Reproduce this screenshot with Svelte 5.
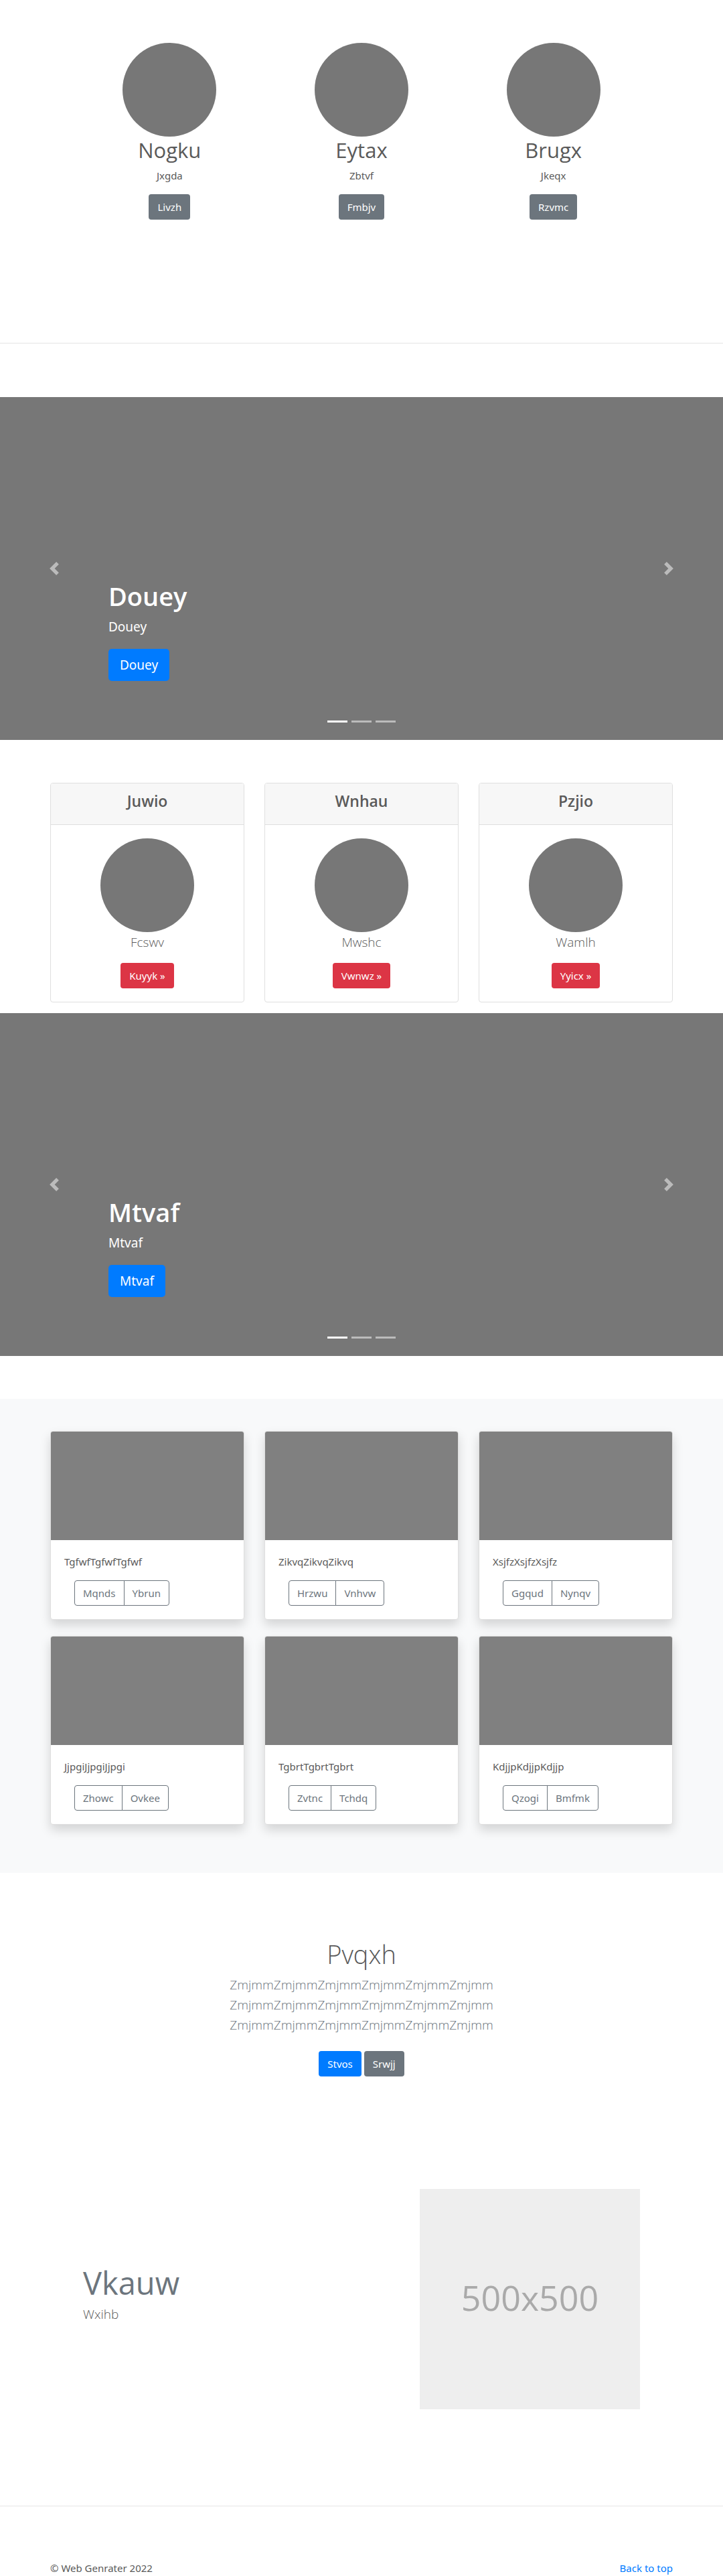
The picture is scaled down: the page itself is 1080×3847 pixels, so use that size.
<script>
  const people = [
    { name: 'Nogku', text: 'Jxgda', action: 'Livzh' },
    { name: 'Eytax', text: 'Zbtvf', action: 'Fmbjv' },
    { name: 'Brugx', text: 'Jkeqx', action: 'Rzvmc' }
  ];
  const plans = [
    { title: 'Juwio', text: 'Fcswv', action: 'Kuyyk »' },
    { title: 'Wnhau', text: 'Mwshc', action: 'Vwnwz »' },
    { title: 'Pzjio', text: 'Wamlh', action: 'Yyicx »' }
  ];
  const album = [
    { text: 'TgfwfTgfwfTgfwf', actions: ['Mqnds', 'Ybrun'] },
    { text: 'ZikvqZikvqZikvq', actions: ['Hrzwu', 'Vnhvw'] },
    { text: 'XsjfzXsjfzXsjfz', actions: ['Ggqud', 'Nynqv'] },
    { text: 'JjpgiJjpgiJjpgi', actions: ['Zhowc', 'Ovkee'] },
    { text: 'TgbrtTgbrtTgbrt', actions: ['Zvtnc', 'Tchdq'] },
    { text: 'KdjjpKdjjpKdjjp', actions: ['Qzogi', 'Bmfmk'] }
  ];
  const introLine = 'Zmjmm'.repeat(6);
</script>

{#snippet carousel(label)}
  <section class="carousel" aria-label={label}>
    <div class="caption">
      <h1>{label}</h1>
      <p>{label}</p>
      <a class="btn btn-lg primary" href="#top">{label}</a>
    </div>
    <button class="arrow prev" aria-label="Previous">
      <svg viewBox="0 0 8 8" width="20" height="20"><path d="M5.25 0l-4 4 4 4 1.5-1.5L4.25 4l2.5-2.5L5.25 0z" fill="#fff" /></svg>
    </button>
    <button class="arrow next" aria-label="Next">
      <svg viewBox="0 0 8 8" width="20" height="20"><path d="M2.75 0l-1.5 1.5L3.75 4l-2.5 2.5L2.75 8l4-4-4-4z" fill="#fff" /></svg>
    </button>
    <div class="indicators">
      {#each [0, 1, 2] as i}
        <button class:active={i === 0} aria-label={`Slide ${i + 1}`}></button>
      {/each}
    </div>
  </section>
{/snippet}

<main id="top">
  <section class="people container">
    {#each people as person}
      <div class="person">
        <div class="circle"></div>
        <h2>{person.name}</h2>
        <p>{person.text}</p>
        <a class="btn secondary" href="#top">{person.action}</a>
      </div>
    {/each}
  </section>

  <hr class="divider" />

  {@render carousel('Douey')}

  <section class="plans container columns">
    {#each plans as plan}
      <article class="card">
        <header><h4>{plan.title}</h4></header>
        <div class="plan-body">
          <div class="circle"></div>
          <p class="lead">{plan.text}</p>
          <a class="btn danger" href="#top">{plan.action}</a>
        </div>
      </article>
    {/each}
  </section>

  {@render carousel('Mtvaf')}

  <section class="album">
    <div class="container columns">
      {#each album as item}
        <article class="card raised">
          <div class="thumb"></div>
          <div class="card-body">
            <p>{item.text}</p>
            <div class="group">
              {#each item.actions as action}
                <button class="btn outline">{action}</button>
              {/each}
            </div>
          </div>
        </article>
      {/each}
    </div>
  </section>

  <section class="intro">
    <h1>Pvqxh</h1>
    <p class="lead">{introLine}<br />{introLine}<br />{introLine}</p>
    <div class="intro-actions">
      <a class="btn primary" href="#top">Stvos</a>
      <a class="btn secondary" href="#top">Srwjj</a>
    </div>
  </section>

  <section class="feature container">
    <div>
      <h2>Vkauw</h2>
      <p class="lead">Wxihb</p>
    </div>
    <div class="placeholder">500x500</div>
  </section>

  <hr class="footer-line" />

  <footer class="container">
    <span>© Web Genrater 2022</span>
    <a href="#top">Back to top</a>
  </footer>
</main>

<style>
  :global(body) {
    background: #fff;
  }
  main {
    font: 400 15px/24px 'Noto Sans', 'Open Sans', sans-serif;
    color: #5a5a5a;
  }
  main :global(*) {
    box-sizing: border-box;
  }
  h1, h2, h4, p {
    margin: 0;
  }
  h1, h2, h4, .lead, .placeholder {
    font-family: 'Open Sans', 'Noto Sans', sans-serif;
  }
  a {
    color: #007bff;
    text-decoration: none;
  }
  .container {
    max-width: 960px;
    margin: 0 auto;
    padding: 0 15px;
  }
  .columns {
    display: grid;
    grid-template-columns: repeat(3, 1fr);
    column-gap: 30px;
    row-gap: 24px;
  }
  .circle {
    width: 140px;
    height: 140px;
    margin: 0 auto;
    border-radius: 50%;
    background: #777;
  }
  .btn {
    display: inline-block;
    padding: 6px 12px;
    border: 1px solid transparent;
    border-radius: 4px;
    color: #fff;
    font: inherit;
    cursor: pointer;
  }
  .btn-lg {
    padding: 8px 16px;
    border-radius: 5px;
    font-size: 19px;
    line-height: 30px;
  }
  .primary {
    background: #007bff;
  }
  .secondary {
    background: #6c757d;
  }
  .danger {
    background: #dc3545;
  }
  .lead {
    font-size: 19px;
    font-weight: 300;
    line-height: 30px;
  }

  .people {
    display: grid;
    grid-template-columns: repeat(3, 1fr);
    max-width: 890px;
    padding-top: 64px;
    text-align: center;
  }
  .person h2 {
    margin-bottom: 6px;
    font-size: 31px;
    font-weight: 400;
    line-height: 40px;
  }
  .person p {
    margin-bottom: 16px;
  }
  hr {
    height: 1px;
    border: 0;
    background: #e5e5e5;
  }
  .divider {
    margin: 184px 0 80px;
  }

  .carousel {
    position: relative;
    display: flex;
    flex-direction: column;
    justify-content: flex-end;
    min-height: 512px;
    padding: 0 15% 88px;
    background: #777;
    color: #fff;
  }
  .caption h1 {
    margin-bottom: 6px;
    font-size: 38px;
    font-weight: 600;
    line-height: 50px;
  }
  .caption p {
    margin-bottom: 18px;
    font-size: 19px;
    line-height: 30px;
  }
  .arrow {
    position: absolute;
    top: 0;
    bottom: 0;
    display: flex;
    align-items: center;
    justify-content: center;
    width: 15%;
    padding: 0;
    border: 0;
    background: none;
    opacity: 0.5;
  }
  .prev {
    left: 0;
  }
  .next {
    right: 0;
  }
  .indicators {
    position: absolute;
    right: 0;
    bottom: 26px;
    left: 0;
    display: flex;
    justify-content: center;
    gap: 6px;
  }
  .indicators button {
    width: 30px;
    height: 3px;
    padding: 0;
    border: 0;
    background: #fff;
    opacity: 0.5;
  }
  .indicators .active {
    opacity: 1;
  }

  .plans {
    padding-top: 64px;
    padding-bottom: 16px;
    text-align: center;
  }
  .card {
    overflow: hidden;
    border: 1px solid #dfdfdf;
    border-radius: 4px;
    background: #fff;
  }
  .card header {
    padding: 12px 20px 20px;
    border-bottom: 1px solid #dfdfdf;
    background: #f7f7f7;
  }
  .card h4 {
    font-size: 23px;
    font-weight: 600;
    line-height: 29px;
  }
  .plan-body,
  .card-body {
    padding: 20px;
  }
  .plan-body p,
  .card-body p {
    margin-bottom: 16px;
  }

  .album {
    margin-top: 64px;
    padding: 48px 0 72px;
    background: #f8f9fa;
  }
  .raised {
    box-shadow: 0 8px 16px rgba(0, 0, 0, 0.15);
  }
  .thumb {
    height: 162px;
    background: #808080;
  }
  .group {
    display: flex;
    padding-left: 15px;
  }
  .outline {
    border-color: #6c757d;
    background: transparent;
    color: #6c757d;
  }
  .outline:first-child {
    border-radius: 4px 0 0 4px;
  }
  .outline:last-child {
    margin-left: -1px;
    border-radius: 0 4px 4px 0;
  }

  .intro {
    padding: 96px 15px 168px;
    text-align: center;
  }
  .intro h1 {
    margin-bottom: 6px;
    font-size: 38px;
    font-weight: 300;
    line-height: 50px;
  }
  .intro .lead {
    margin-bottom: 24px;
    color: #6c757d;
  }
  .intro-actions {
    display: flex;
    justify-content: center;
    gap: 4px;
  }

  .feature {
    display: grid;
    grid-template-columns: 1fr 329px;
    align-items: center;
    max-width: 862px;
  }
  .feature h2 {
    margin-bottom: 4px;
    color: #6c757d;
    font-size: 47px;
    font-weight: 400;
    line-height: 56px;
  }
  .feature .lead {
    margin-bottom: 16px;
  }
  .placeholder {
    display: grid;
    place-items: center;
    aspect-ratio: 1;
    padding-bottom: 6px;
    background: #eee;
    color: #aaa;
    font-size: 52px;
  }
  .footer-line {
    margin: 144px 0 80px;
  }
  footer {
    display: flex;
    justify-content: space-between;
  }
</style>
